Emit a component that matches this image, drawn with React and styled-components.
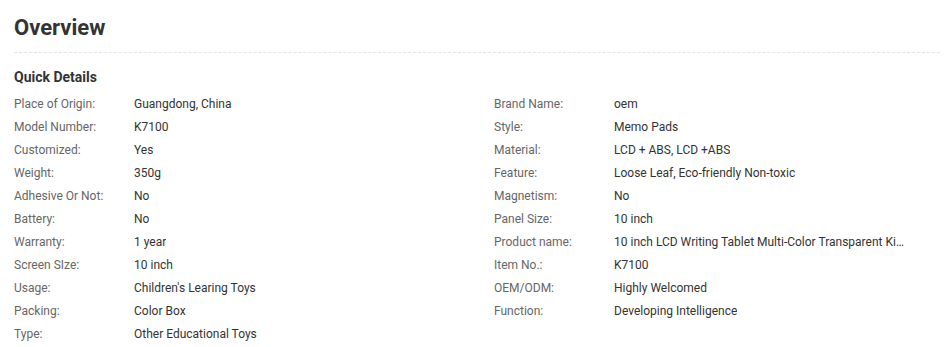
import React from 'react'
import styled, { createGlobalStyle } from 'styled-components'

const GlobalStyle = createGlobalStyle`
  body {
    margin: 0;
    background: #fff;
    font-family: Roboto, "Liberation Sans", sans-serif;
  }
`

const Wrapper = styled.div`
  padding: 0 9px 0 14px;
`
const Title = styled.h2`
  margin: 0;
  padding: 15px 0 11px;
  font-size: 22px;
  font-weight: 700;
  line-height: 26px;
  color: #333;
  border-bottom: 1px dashed #e5e5e5;
`
const SubTitle = styled.h3`
  margin: 0;
  padding: 16px 0 7px;
  font-size: 14px;
  font-weight: 700;
  line-height: 16px;
  color: #333;
`
const Columns = styled.div`
  display: flex;
`
const Column = styled.dl`
  margin: 0;
  width: 480px;
  flex-shrink: 0;
`
const Row = styled.div`
  display: flex;
  height: 23px;
  align-items: center;
  font-size: 12px;
`
const Label = styled.dt`
  width: 120px;
  color: #666;
`
const Value = styled.dd`
  margin: 0;
  max-width: 296px;
  color: #333;
  white-space: nowrap;
  overflow: hidden;
  text-overflow: ellipsis;
`

const left = [
  ['Place of Origin:', 'Guangdong, China'],
  ['Model Number:', 'K7100'],
  ['Customized:', 'Yes'],
  ['Weight:', '350g'],
  ['Adhesive Or Not:', 'No'],
  ['Battery:', 'No'],
  ['Warranty:', '1 year'],
  ['Screen SIze:', '10 inch'],
  ['Usage:', "Children's Learing Toys"],
  ['Packing:', 'Color Box'],
  ['Type:', 'Other Educational Toys'],
]

const right = [
  ['Brand Name:', 'oem'],
  ['Style:', 'Memo Pads'],
  ['Material:', 'LCD + ABS, LCD +ABS'],
  ['Feature:', 'Loose Leaf, Eco-friendly Non-toxic'],
  ['Magnetism:', 'No'],
  ['Panel Size:', '10 inch'],
  ['Product name:', '10 inch LCD Writing Tablet Multi-Color Transparent Kids Drawing Board'],
  ['Item No.:', 'K7100'],
  ['OEM/ODM:', 'Highly Welcomed'],
  ['Function:', 'Developing Intelligence'],
]

const DetailList = ({ items }) => (
  <Column>
    {items.map(([k, v]) => (
      <Row key={k}>
        <Label>{k}</Label>
        <Value>{v}</Value>
      </Row>
    ))}
  </Column>
)

const App = () => {
  return (
    <Wrapper>
      <GlobalStyle />
      <Title>Overview</Title>
      <SubTitle>Quick Details</SubTitle>
      <Columns>
        <DetailList items={left} />
        <DetailList items={right} />
      </Columns>
    </Wrapper>
  )
}

export default App
